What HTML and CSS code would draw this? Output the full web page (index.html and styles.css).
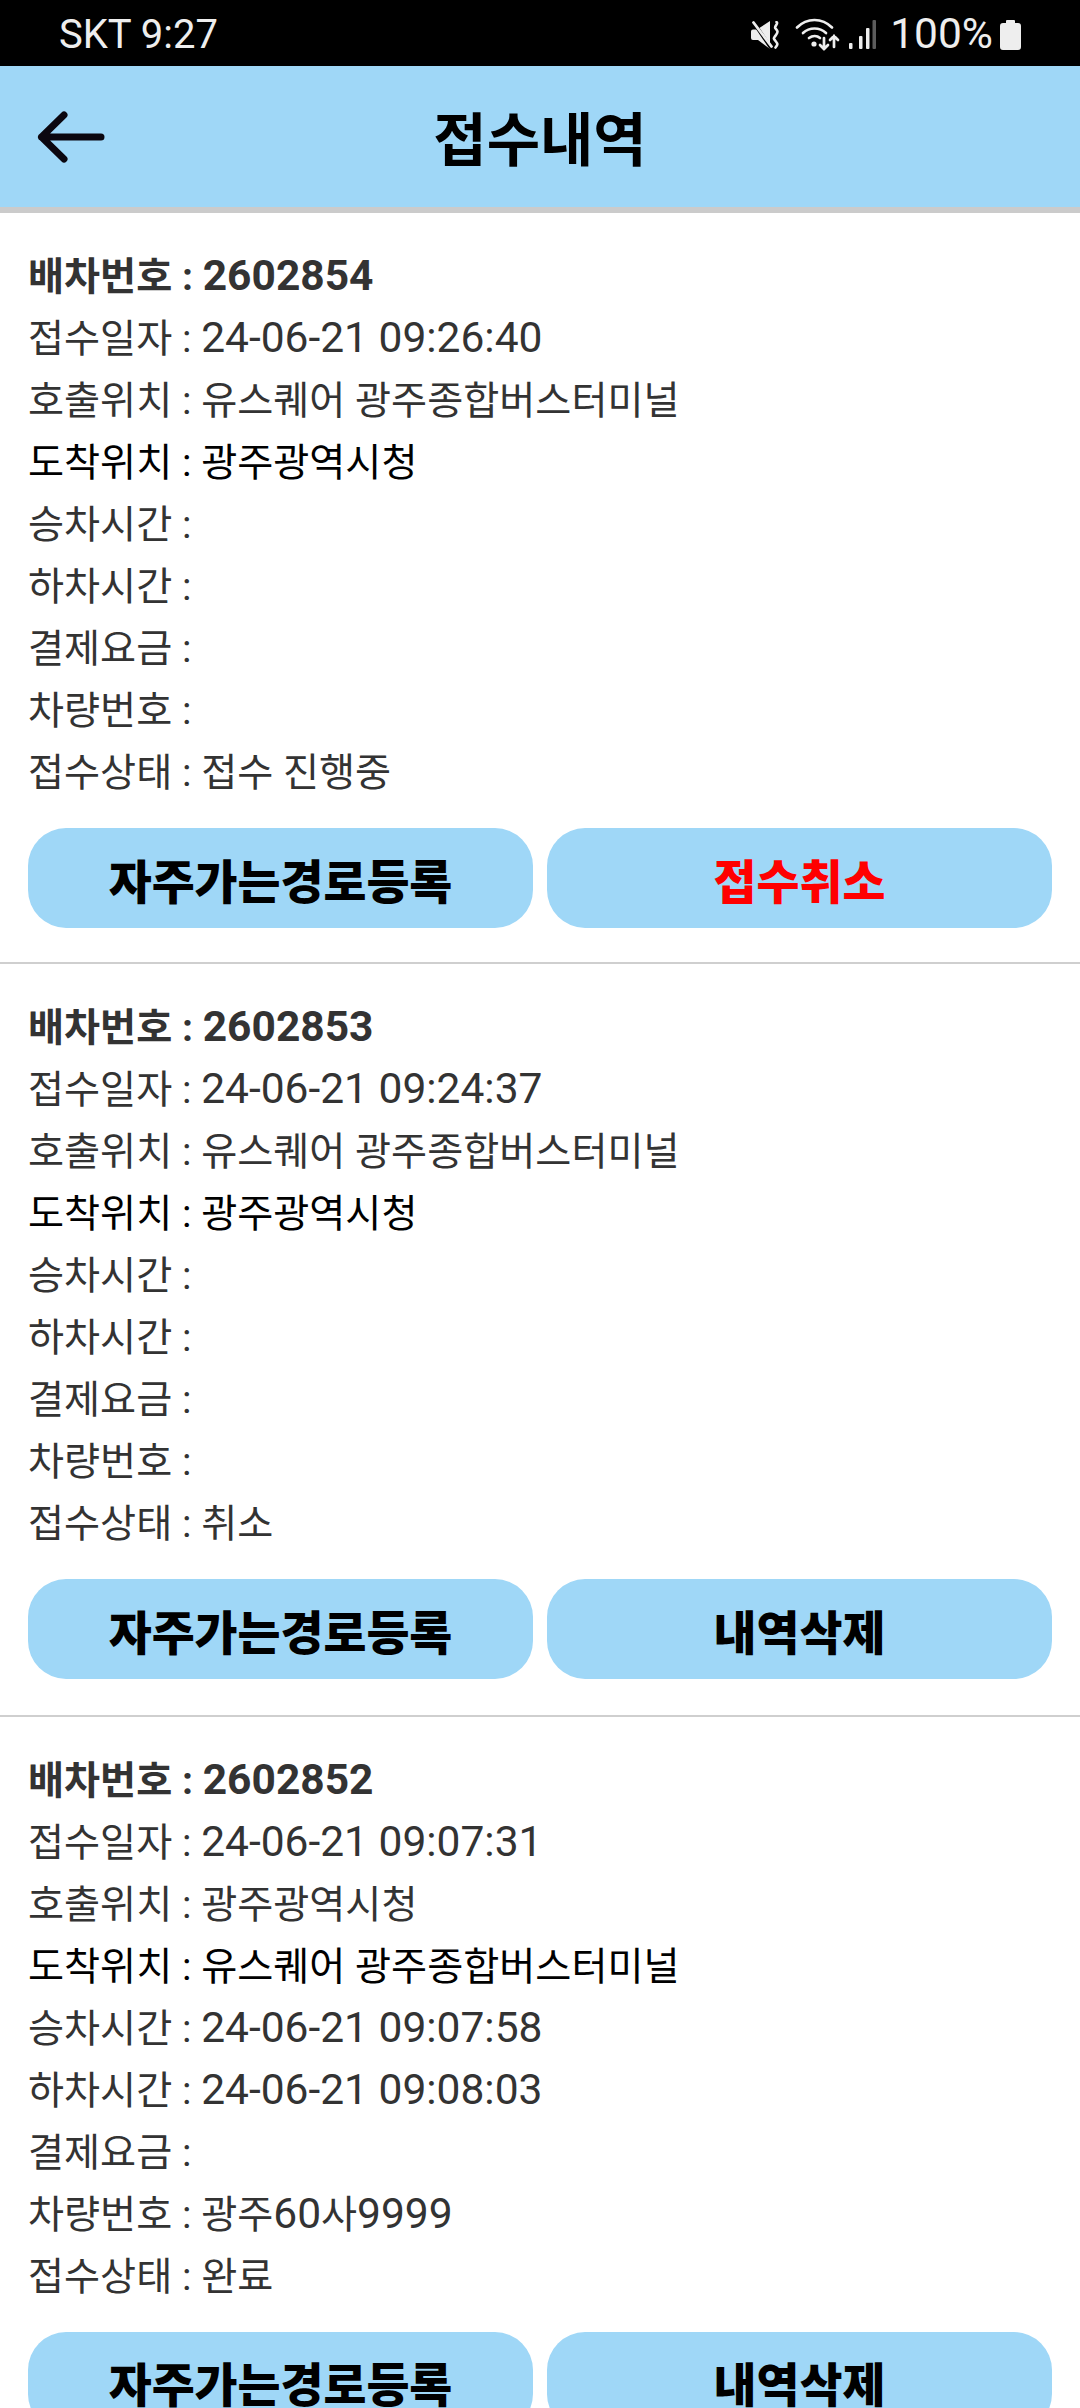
FILE: index.html
```html
<!DOCTYPE html>
<html lang="ko">
<head>
<meta charset="utf-8">
<title>접수내역</title>
<link rel="stylesheet" href="styles.css">
</head>
<body>
<div class="screen">
  <div class="status">
    <span class="status-left">SKT 9:27</span>
    <div class="status-right">
      <svg class="ic-mute" viewBox="0 0 29 28"><path d="M0 10.500q0-2 2-2h4L19 0v28L7 19H2q-2 0-2-2z" fill="#eee"/><path d="M1 -1l19 28" stroke="#000" stroke-width="3.600"/><path d="M2.500 1.500l18 24" stroke="#eee" stroke-width="2.800" stroke-linecap="round"/><path d="M25.500 1c2.500 2-3 4-1 6.500s3 3 .5 6.500-3 3-.5 6 2.500 3.500 0 6.500" stroke="#eee" stroke-width="2.600" fill="none" stroke-linecap="round"/></svg>
      <svg class="ic-wifi" viewBox="0 0 45 33"><g fill="none" stroke="#eee" stroke-width="2.700" stroke-linecap="round"><path d="M2 9.500C12 -.5 27 -.5 37 9.500"/><path d="M8 15c6.500-6 16.500-6 23 0"/><path d="M14 20c3.500-2.500 8-2.500 11 0"/><path d="M29 20v11M25 27l4 4 4-4"/><path d="M39 29V18M35 22l4-4 4 4"/></g><circle cx="19" cy="26" r="2.600" fill="#eee"/></svg>
      <svg class="ic-signal" viewBox="0 0 27 30"><g fill="#eee"><rect x="0" y="23" width="3.500" height="6" rx="1"/><rect x="10" y="16" width="3.500" height="13" rx="1"/><rect x="17" y="8" width="3.500" height="21" rx="1"/></g><rect x="23.500" y="0" width="3.500" height="29" rx="1" fill="#5c5c5c"/></svg>
      <span class="status-batt">100%</span>
      <svg class="ic-batt" viewBox="0 0 21 30"><path d="M6 1q0-1 1-1h7q1 0 1 1v2h3q3 0 3 3v21q0 3-3 3H3q-3 0-3-3V6q0-3 3-3h3z" fill="#eee"/></svg>
    </div>
  </div>
  <header class="appbar">
    <svg class="back" viewBox="0 0 74 60"><path d="M8.500 30H68M31 8 8.500 30 31 52" fill="none" stroke="#0b0710" stroke-width="7" stroke-linecap="round" stroke-linejoin="round"/></svg>
    <h1 class="title">접수내역</h1>
  </header>
  <main>
    <section class="item">
      <p class="line no">배차번호 : <span class="num">2602854</span></p>
      <p class="line">접수일자 : <span class="num">24-06-21 09:26:40</span></p>
      <p class="line">호출위치 : 유스퀘어 광주종합버스터미널</p>
      <p class="line dest">도착위치 : 광주광역시청</p>
      <p class="line">승차시간 :</p>
      <p class="line">하차시간 :</p>
      <p class="line">결제요금 :</p>
      <p class="line">차량번호 :</p>
      <p class="line">접수상태 : 접수 진행중</p>
      <div class="actions"><button class="btn">자주가는경로등록</button><button class="btn danger">접수취소</button></div>
    </section>
    <section class="item">
      <p class="line no">배차번호 : <span class="num">2602853</span></p>
      <p class="line">접수일자 : <span class="num">24-06-21 09:24:37</span></p>
      <p class="line">호출위치 : 유스퀘어 광주종합버스터미널</p>
      <p class="line dest">도착위치 : 광주광역시청</p>
      <p class="line">승차시간 :</p>
      <p class="line">하차시간 :</p>
      <p class="line">결제요금 :</p>
      <p class="line">차량번호 :</p>
      <p class="line">접수상태 : 취소</p>
      <div class="actions"><button class="btn">자주가는경로등록</button><button class="btn">내역삭제</button></div>
    </section>
    <section class="item">
      <p class="line no">배차번호 : <span class="num">2602852</span></p>
      <p class="line">접수일자 : <span class="num">24-06-21 09:07:31</span></p>
      <p class="line">호출위치 : 광주광역시청</p>
      <p class="line dest">도착위치 : 유스퀘어 광주종합버스터미널</p>
      <p class="line">승차시간 : <span class="num">24-06-21 09:07:58</span></p>
      <p class="line">하차시간 : <span class="num">24-06-21 09:08:03</span></p>
      <p class="line">결제요금 :</p>
      <p class="line">차량번호 : 광주<span class="num">60</span>사<span class="num">9999</span></p>
      <p class="line">접수상태 : 완료</p>
      <div class="actions"><button class="btn">자주가는경로등록</button><button class="btn">내역삭제</button></div>
    </section>
  </main>
</div>
</body>
</html>
```
FILE: styles.css
```css
* { box-sizing: border-box; }
html, body { margin: 0; padding: 0; background: #fff; }
body { font-family: Roboto, "Noto Sans CJK KR", sans-serif; }
.screen { width: 1080px; height: 2408px; overflow: hidden; }
.status { height: 66px; background: #000; display: flex; align-items: center; justify-content: space-between; padding: 3px 59px 0 59px; color: #eee; font-size: 40px; }
.status-left { font-family: Roboto, sans-serif; }
.status-right { display: flex; align-items: center; }
.status-batt { margin: 0 7px 0 14px; font-size: 42.500px; line-height: 1; }
.ic-mute { width: 29px; height: 28px; margin-right: 15px; }
.ic-wifi { width: 45px; height: 33px; margin-right: 9px; }
.ic-signal { width: 27px; height: 30px; }
.ic-batt { width: 21px; height: 30px; }
.appbar { height: 147px; background: #9fd7f7; border-bottom: 6px solid #cbcbcb; display: flex; align-items: center; justify-content: center; position: relative; padding-top: 8px; }
.back { position: absolute; left: 33px; top: 41px; width: 74px; height: 60px; }
.title { margin: 0; font-size: 58px; font-weight: 700; color: #000; line-height: 1; }
.item { height: 752.500px; border-bottom: 2px solid #cfcfcf; padding: 33px 28px 0; }
.item:first-child { height: 751px; }
.line { margin: 0; height: 62px; line-height: 62px; font-size: 39.200px; color: #333; white-space: nowrap; }
.num { font-size: 42.500px; line-height: 1; }
.no { font-weight: 700; }
.dest { color: #000; }
.actions { display: flex; gap: 14px; margin-top: 24px; }
.btn { flex: 1; height: 100px; border: 0; border-radius: 38px; background: #9fd7f7; color: #000; font: 900 46.700px Roboto, "Noto Sans CJK KR", sans-serif; padding: 0; }
.danger { color: #f00; }
```
